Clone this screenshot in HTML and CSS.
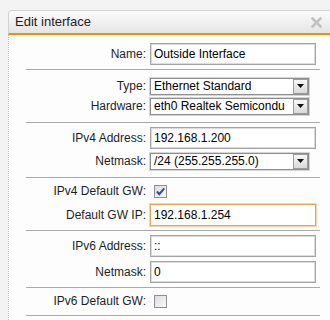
FILE: index.html
```html
<!DOCTYPE html>
<html lang="en">
<head>
    <meta charset="UTF-8">
    <title>Edit interface</title>
    <link rel="stylesheet" href="styles.css">
</head>
<body>
    <div class="dialog">
        <div class="dialog-head">
            <span class="title">Edit interface</span>
            <span class="close">
                <svg width="11" height="11" viewBox="0 0 11 11"><path d="M1.5 1.5 L9.5 9.5 M9.5 1.5 L1.5 9.5" stroke="#c2c2c2" stroke-width="2.6" stroke-linecap="round"/></svg>
            </span>
        </div>

        <form class="dialog-body">
            <div class="group">
                <div class="row">
                    <label>Name:</label>
                    <input class="text" type="text" value="Outside Interface">
                </div>
            </div>

            <div class="group">
                <div class="row row-select first">
                    <label>Type:</label>
                    <div class="select"><span class="value">Ethernet Standard</span><span class="arrow"><svg width="7" height="4" viewBox="0 0 7 4"><path d="M0 0 H7 L3.5 4 Z" fill="#111"/></svg></span></div>
                </div>
                <div class="row row-select">
                    <label>Hardware:</label>
                    <div class="select"><span class="value">eth0 Realtek Semicondu</span><span class="arrow"><svg width="7" height="4" viewBox="0 0 7 4"><path d="M0 0 H7 L3.5 4 Z" fill="#111"/></svg></span></div>
                </div>
            </div>

            <div class="group">
                <div class="row">
                    <label>IPv4 Address:</label>
                    <input class="text" type="text" value="192.168.1.200">
                </div>
                <div class="row row-select">
                    <label>Netmask:</label>
                    <div class="select"><span class="value">/24 (255.255.255.0)</span><span class="arrow"><svg width="7" height="4" viewBox="0 0 7 4"><path d="M0 0 H7 L3.5 4 Z" fill="#111"/></svg></span></div>
                </div>
            </div>

            <div class="group">
                <div class="row row-check">
                    <label>IPv4 Default GW:</label>
                    <span class="check"><svg width="11" height="11" viewBox="0 0 11 11"><path d="M2 5.5 L4.3 8.2 L9.2 2.3" fill="none" stroke="#2f4aa6" stroke-width="2"/></svg></span>
                </div>
                <div class="row">
                    <label>Default GW IP:</label>
                    <input class="text focused" type="text" value="192.168.1.254">
                </div>
            </div>

            <div class="group">
                <div class="row">
                    <label>IPv6 Address:</label>
                    <input class="text" type="text" value="::">
                </div>
                <div class="row">
                    <label>Netmask:</label>
                    <input class="text" type="text" value="0">
                </div>
            </div>

            <div class="group">
                <div class="row row-check">
                    <label>IPv6 Default GW:</label>
                    <span class="check"></span>
                </div>
            </div>
        </form>
    </div>
</body>
</html>
```

FILE: styles.css
```css
body { margin: 0; background: #f3f3f3; font-family: "Liberation Sans", Arial, sans-serif; font-size: 12px; color: #1d1d24; overflow: hidden; }
.dialog { width: 330px; margin: 10px 0 0 8px; }
.dialog-head { display: flex; align-items: center; height: 22px; border: 1px solid #d2d2d2; border-right: none; border-bottom: 2px solid #f29100; border-radius: 4px 0 0 0; background: linear-gradient(#fcfcfc, #e5e5e5); }
.title { padding-left: 6px; font-size: 13px; line-height: 22px; color: #1c1c28; }
.close { display: flex; margin-left: auto; margin-right: 16px; }
.dialog-body { margin: 0; padding: 4px 0 6px 17px; background: #fdfdfd; border-left: 1px dotted #c4c4c4; }
.group { width: 294px; padding: 2px 0; border-bottom: 1px solid #aaaaaa; }
.group:last-child { padding-bottom: 3px; }
.row { display: flex; align-items: center; height: 26px; }
.row-select { height: 20px; }
.row-select.first { margin-top: 4px; }
.row-select:last-child { margin-bottom: 4px; }
.row-check { height: 22px; }
label { width: 120px; margin-right: 4px; flex-shrink: 0; text-align: right; }
.text { box-sizing: border-box; width: 166px; height: 22px; margin: 0; padding: 0 3px; border: 1px solid #a3a3a3; box-shadow: inset 0 0 0 1px #dcdcdc; background: #fff; font: inherit; color: #000; outline: none; }
.text.focused { border-color: #e2a551; box-shadow: 0 0 0 1px #f4d7a8; }
.select { box-sizing: border-box; display: flex; width: 159px; height: 17px; border: 1px solid #8e8e8e; box-shadow: 0 0 0 1px #d6d6d6; background: #fff; }
.value { flex: 1; overflow: hidden; white-space: nowrap; padding-left: 3px; line-height: 15px; color: #000; }
.arrow { box-sizing: border-box; display: flex; align-items: center; justify-content: center; width: 15px; height: 15px; border: 1px solid #9c9c9c; background: linear-gradient(#f7f7f7, #dadada); }
.check { box-sizing: border-box; display: flex; align-items: center; justify-content: center; width: 13px; height: 13px; margin-left: 4px; border: 1px solid #8f9096; background: linear-gradient(135deg, #dcdcdc, #fafafa); }
```
